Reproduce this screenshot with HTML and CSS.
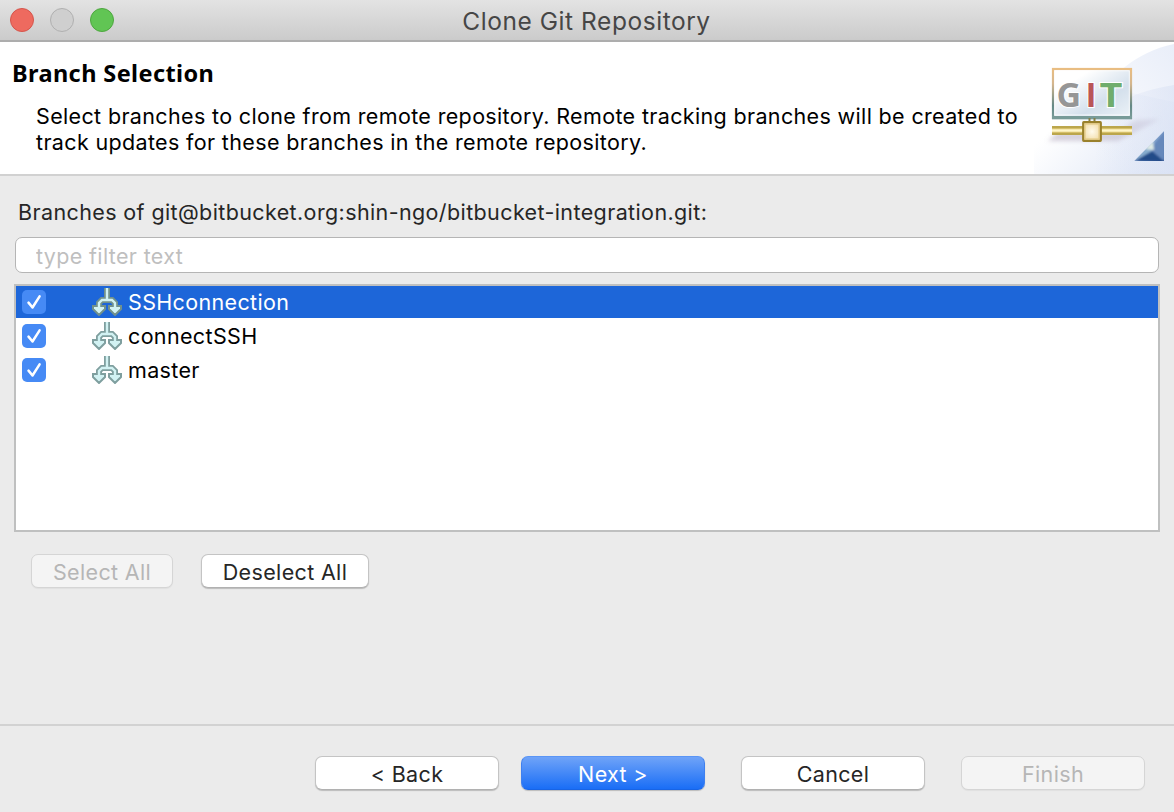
FILE: index.html
```html
<!DOCTYPE html>
<html lang="en">
<head>
<meta charset="utf-8">
<title>Clone Git Repository</title>
<link rel="stylesheet" href="styles.css">
</head>
<body>
<svg class="defs" aria-hidden="true">
  <symbol id="check" viewBox="0 0 24 24"><path d="M6.5 12.6 10.5 17.5 17.6 6.3" fill="none" stroke="#fff" stroke-width="2.5" stroke-linecap="round" stroke-linejoin="round"/></symbol>
  <symbol id="branch" viewBox="0 0 30 28">
    <path d="M15 0V12M7 20V15L10 12H20L23 15V20" fill="none" stroke="currentColor" stroke-width="6"/>
    <path d="M1 18H13V21L7 27L1 21ZM17 18H29V21L23 27L17 21Z" fill="#d2f2f3" stroke="currentColor" stroke-width="2"/>
    <path d="M15 0V12M7 21V15L10 12H20L23 15V21" fill="none" stroke="#d2f2f3" stroke-width="2.4"/>
  </symbol>
</svg>
<div class="window">
  <header class="titlebar">
    <div class="lights"><i class="red"></i><i class="gray"></i><i class="green"></i></div>
    <span class="title">Clone Git Repository</span>
  </header>
  <section class="banner">
    <div class="copy">
      <h1>Branch Selection</h1>
      <p>Select branches to clone from remote repository. Remote tracking branches will be created to<br>track updates for these branches in the remote repository.</p>
    </div>
    <svg class="art" viewBox="0 0 140 132">
      <defs>
        <linearGradient id="wash" x1="0" y1=".3" x2="1" y2="1"><stop offset=".2" stop-color="#fff"/><stop offset="1" stop-color="#dce4f5"/></linearGradient>
        <linearGradient id="arc" x1="0" y1="1" x2="1" y2="0"><stop offset=".25" stop-color="#e6ebf8" stop-opacity="0"/><stop offset="1" stop-color="#e9eef9"/></linearGradient>
        <linearGradient id="arc2" x1="0" y1="0" x2="1" y2="0"><stop offset="0" stop-color="#d8e0f3" stop-opacity="0"/><stop offset="1" stop-color="#d5def2"/></linearGradient>
        <linearGradient id="screen" x1="0" y1="0" x2="1" y2="1"><stop offset=".25" stop-color="#fff"/><stop offset=".65" stop-color="#d4e0ec"/><stop offset="1" stop-color="#edf3f8"/></linearGradient>
        <linearGradient id="frame" x1="0" y1="0" x2="0" y2="1"><stop offset="0" stop-color="#e9bd82"/><stop offset=".3" stop-color="#d5b68e"/><stop offset=".75" stop-color="#648986"/><stop offset="1" stop-color="#789b98"/></linearGradient>
        <linearGradient id="shade" x1="0" y1="1" x2="1" y2="0"><stop offset="0" stop-color="#aca0b5" stop-opacity=".5"/><stop offset="1" stop-color="#aaa0bb" stop-opacity=".2"/></linearGradient>
        <linearGradient id="blue" x1="0" y1="0" x2="1" y2="1"><stop offset=".35" stop-color="#c7d9e7"/><stop offset=".65" stop-color="#527bb8"/><stop offset="1" stop-color="#163b7d"/></linearGradient>
        <radialGradient id="node"><stop offset="0" stop-color="#fffbed"/><stop offset="1" stop-color="#f3dfae"/></radialGradient>
        <filter id="soft" x="-20%" y="-40%" width="140%" height="180%"><feGaussianBlur stdDeviation="2"/></filter>
        <filter id="facet"><feGaussianBlur stdDeviation=".8"/></filter>
        <clipPath id="corner"><path d="M100 119 130 89V119Z"/></clipPath>
      </defs>
      <path d="M0 132V30L140 60V132Z" fill="url(#wash)"/>
      <path d="M50 60C80 35 100 10 140 2V132H30Z" fill="url(#arc)"/>
      <path d="M60 80C85 56 110 48 140 43V132H60Z" fill="url(#arc2)" opacity=".5"/>
      <path d="M14 99 24 90H85L101 78L126 77L84 99Z" fill="url(#shade)" filter="url(#soft)"/>
      <rect x="19" y="27" width="78" height="49" fill="url(#screen)" stroke="url(#frame)" stroke-width="2.2"/>
      <path d="M18 75.7H98" stroke="#789b98" stroke-width="3.2"/>
      <path d="M20.8 28.8H95.3V73H20.8Z" fill="none" stroke="#fff" stroke-width="1" opacity=".7"/>
      <g class="git"><text x="22.5" y="64.5" fill="#969696">G</text><text x="51.5" y="64.5" fill="#b95558" textLength="11" lengthAdjust="spacingAndGlyphs">I</text><text x="65.5" y="64.5" fill="#70ad6d" textLength="23" lengthAdjust="spacingAndGlyphs">T</text></g>
      <path d="M18 88.5H98" stroke="#bba64c" stroke-width="9"/><path d="M18 88.5H98" stroke="#d5bf6a" stroke-width="5"/><path d="M18 88.5H98" stroke="#fff6c8" stroke-width="2.4"/>
      <path d="M55.5 76V82M60.5 76V82" stroke="#83804d" stroke-width="2"/>
      <rect x="49.2" y="80.2" width="17.6" height="18.6" rx=".5" fill="url(#node)" stroke="#9a812c" stroke-width="2.2"/><rect x="51" y="82" width="14" height="15" fill="none" stroke="#e0c67c"/>
      <g clip-path="url(#corner)"><path d="M100 119H131V88Z" fill="url(#blue)"/><g filter="url(#facet)"><path d="M101 119H131L118 109Z" fill="#244b88"/><path d="M131 120V88L117 108Z" fill="#6688bb"/><path d="M101 118 118 101V109Z" fill="#87adcf"/><path d="M111 107 119 99 120 108Z" fill="#e0ebe6"/></g></g>
    </svg>
  </section>
  <main>
    <label for="filter">Branches of git@bitbucket.org:shin-ngo/bitbucket-integration.git:</label>
    <input id="filter" type="text" placeholder="type filter text">
    <div class="list">
      <div class="row selected"><svg class="box"><use href="#check"/></svg><svg class="branch"><use href="#branch"/></svg><span>SSHconnection</span></div>
      <div class="row"><svg class="box"><use href="#check"/></svg><svg class="branch"><use href="#branch"/></svg><span>connectSSH</span></div>
      <div class="row"><svg class="box"><use href="#check"/></svg><svg class="branch"><use href="#branch"/></svg><span>master</span></div>
    </div>
    <div class="actions"><button class="btn select" disabled>Select All</button><button class="btn deselect">Deselect All</button></div>
  </main>
  <footer><button class="btn">&lt; Back</button><button class="btn primary">Next &gt;</button><button class="btn cancel">Cancel</button><button class="btn" disabled>Finish</button></footer>
</div>
</body>
</html>
```
FILE: styles.css
```css
* { box-sizing: border-box; }
body { margin: 0; font: 21.5px/26px Inter, "Liberation Sans", sans-serif; letter-spacing: .35px; color: #262626; }
.defs { position: absolute; width: 0; height: 0; }
.window { width: 1174px; height: 812px; display: flex; flex-direction: column; background: #ebebeb; overflow: hidden; }
.titlebar { height: 42px; flex: none; display: grid; grid-template-columns: 1fr auto 1fr; align-items: center; padding: 0 11px 0 10px; background: linear-gradient(#e3e3e3, #cbcbcb); border-bottom: 2px solid #adadad; }
.lights { display: flex; gap: 16px; }
.lights i { width: 24px; height: 24px; border-radius: 50%; border: 1px solid; }
.lights .red { background: #ee6a5f; border-color: #d5554c; }
.lights .gray { background: #cfcfcf; border-color: #b0b0b0; }
.lights .green { background: #61c554; border-color: #4ea73f; }
.title { padding-top: 2px; font-size: 24.5px; letter-spacing: .55px; color: #464646; white-space: nowrap; }
.banner { height: 134px; flex: none; display: flex; justify-content: space-between; background: #fff; border-bottom: 2px solid #d1d1d1; color: #000; }
.copy { padding: 16px 0 0 12px; white-space: nowrap; }
h1 { margin: 0; font: bold 23.5px/30px "Noto Sans", sans-serif; letter-spacing: .4px; }
p { margin: 15px 0 0 24px; }
.art { width: 140px; height: 132px; flex: none; }
.git { font: bold 34px "Open Sans", sans-serif; letter-spacing: 0; stroke: #fff; stroke-width: 2px; paint-order: stroke; }
main { flex: 1; padding: 23px 14px 0; display: flex; flex-direction: column; }
label { margin-left: 4px; height: 26px; white-space: nowrap; letter-spacing: .385px; }
input { height: 36px; margin: 12px 1px 0; padding: 2px 20px 0; border: 1.5px solid #b5b5b5; border-radius: 7px; background: #fff; font: inherit; letter-spacing: inherit; outline: 0; }
input::placeholder { color: #bfbfbf; opacity: 1; }
.list { height: 248px; margin-top: 11px; border: 2px solid #bfc0c0; background: #fff; color: #000; }
.row { height: 32px; margin-bottom: 2px; display: flex; align-items: center; padding-left: 6px; }
.selected { background: #1d66d9; color: #fff; }
.box { width: 24px; height: 24px; border-radius: 5px; background: #468af5; }
.branch { width: 30px; height: 28px; margin: 0 6px 0 46px; color: #7f9f9f; }
.selected .branch { color: #71918c; }
.actions { display: flex; gap: 28px; margin: 22px 0 0 17px; }
.btn { height: 34px; padding: 1px 0 0; border: 1px solid #c4c4c4; border-bottom-color: #b1b1b1; border-radius: 7px; background: #fff; box-shadow: 0 1px 1px #0003; font: inherit; letter-spacing: inherit; color: #262626; }
.btn:disabled { background: #f4f4f4; border-color: #d5d5d5; color: #b6b6b6; box-shadow: 0 1px 1px #0000000c; }
.select { width: 142px; }
.deselect { width: 168px; }
footer { height: 88px; flex: none; border-top: 2px solid #d2d2d2; padding: 30px 29px 0 0; display: flex; justify-content: flex-end; align-items: flex-start; gap: 36px; }
footer .btn { width: 184px; }
footer .primary { margin-left: -14px; color: #fff; background: linear-gradient(#72a5f8, #176cf6) border-box; border-color: #5a95f6 #3f80ef #1864e5; }
```
